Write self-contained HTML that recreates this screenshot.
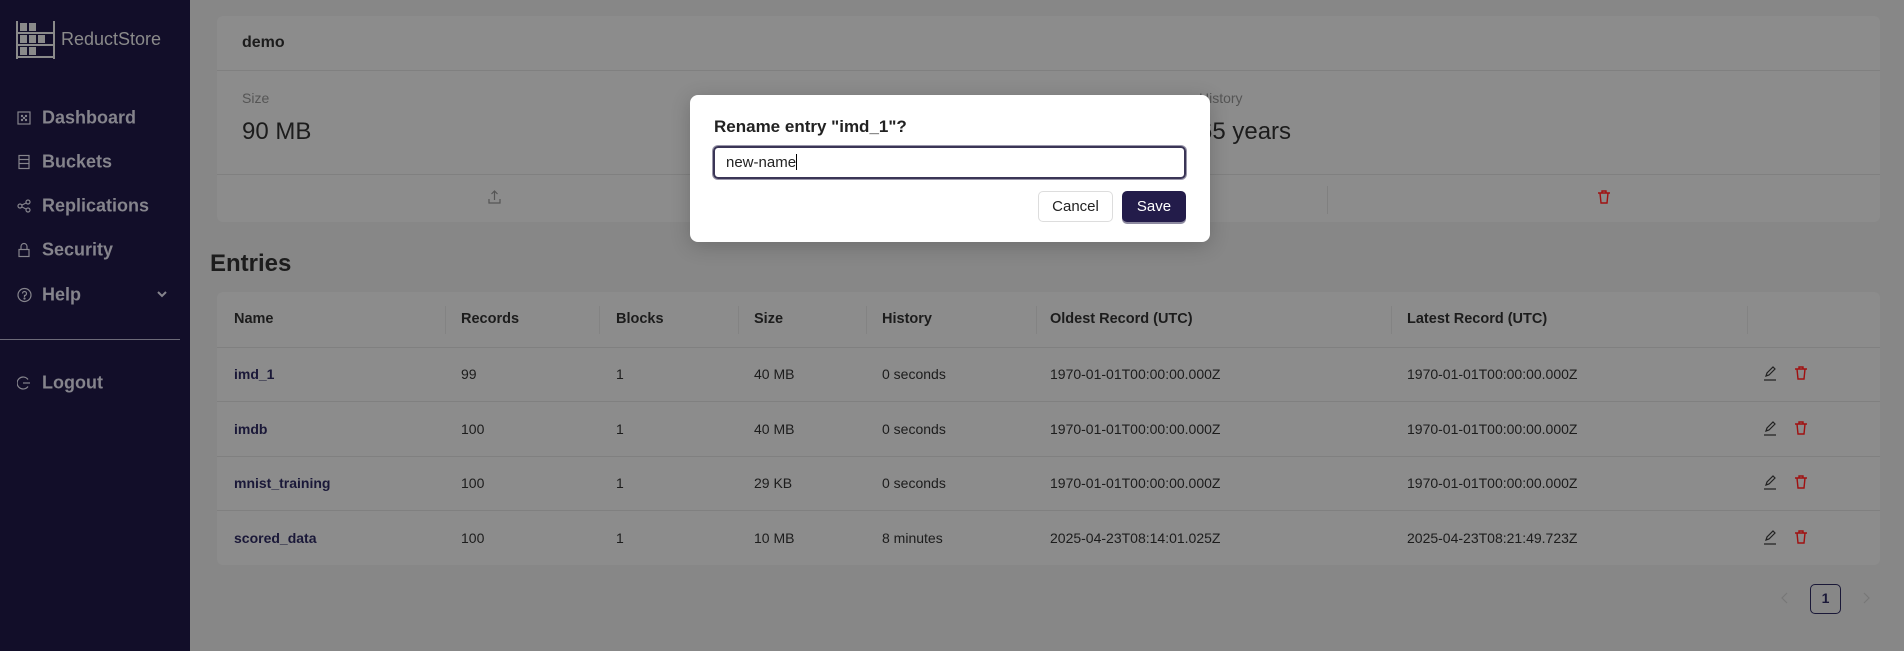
<!DOCTYPE html>
<html><head><meta charset="utf-8"><style>
*{box-sizing:border-box;margin:0;padding:0}
body{width:1904px;height:651px;overflow:hidden;background:#878787;font-family:"Liberation Sans",sans-serif;color:#1c1c1c;position:relative}
.a{position:absolute;white-space:nowrap}
#side{position:absolute;left:0;top:0;width:190px;height:651px;background:#120e29}
.nav{position:absolute;left:42px;font-size:18px;font-weight:bold;color:#85848c;transform:translateY(-50%)}
.ic{position:absolute;left:17px;transform:translateY(-50%)}
.card{position:absolute;left:217px;width:1663px;background:#8c8c8c;border-radius:6px}
.th{font-size:14.5px;font-weight:bold;transform:translateY(-50%)}
.td{font-size:14px;transform:translateY(-50%)}
.hl{position:absolute;height:1px;background:#808080}
</style></head><body>
<div id="side">
<svg class="a" style="left:16px;top:21px" width="40" height="38" viewBox="0 0 40 38" fill="none" stroke="#8a8a8a" stroke-width="2">
<line x1="1" y1="0" x2="1" y2="38"/><line x1="38" y1="0" x2="38" y2="38"/>
<line x1="1" y1="12" x2="38" y2="12"/><line x1="1" y1="24" x2="38" y2="24"/><line x1="1" y1="36" x2="38" y2="36"/>
<g fill="#8a8a8a" stroke="none"><rect x="4" y="2" width="7" height="8"/><rect x="13" y="2" width="7" height="8"/>
<rect x="4" y="14" width="7" height="8"/><rect x="13" y="14" width="7" height="8"/><rect x="22" y="14" width="7" height="8"/>
<rect x="4" y="26" width="7" height="8"/><rect x="13" y="26" width="7" height="8"/></g></svg>
<div class="a" style="left:61px;top:29px;font-size:18px;color:#8a8a8a">ReductStore</div>
<svg class="ic" style="top:118px" width="14" height="14" viewBox="0 0 14 14" fill="none" stroke="#85848c" stroke-width="1.2"><rect x="1" y="1" width="12" height="12"/><circle cx="5" cy="5" r=".6"/><circle cx="9" cy="5" r=".6"/><circle cx="7" cy="7" r=".6"/><circle cx="5" cy="9" r=".6"/><circle cx="9" cy="9" r=".6"/></svg>
<div class="nav" style="top:118px">Dashboard</div>
<svg class="ic" style="top:162px" width="14" height="15" viewBox="0 0 14 15" fill="none" stroke="#85848c" stroke-width="1.2"><rect x="2" y="1" width="10" height="13"/><line x1="2" y1="5" x2="12" y2="5"/><line x1="2" y1="9" x2="12" y2="9"/></svg>
<div class="nav" style="top:162px">Buckets</div>
<svg class="ic" style="top:206px" width="14" height="14" viewBox="0 0 14 14" fill="none" stroke="#85848c" stroke-width="1.2"><circle cx="3" cy="7" r="2"/><circle cx="11" cy="3" r="2"/><circle cx="11" cy="11" r="2"/><line x1="5" y1="6" x2="9" y2="4"/><line x1="5" y1="8" x2="9" y2="10"/></svg>
<div class="nav" style="top:206px">Replications</div>
<svg class="ic" style="top:250px" width="14" height="15" viewBox="0 0 14 15" fill="none" stroke="#85848c" stroke-width="1.2"><rect x="2" y="7" width="10" height="7"/><path d="M4 7V4a3 3 0 0 1 6 0v3"/></svg>
<div class="nav" style="top:250px">Security</div>
<svg class="ic" style="top:295px" width="15" height="15" viewBox="0 0 15 15" fill="none" stroke="#85848c" stroke-width="1.2"><circle cx="7.5" cy="7.5" r="6.5"/><path d="M5.5 6a2 2 0 1 1 2 2v1.5"/><circle cx="7.5" cy="11" r=".5"/></svg>
<div class="nav" style="top:295px">Help</div>
<svg class="a" style="left:157px;top:290px" width="10" height="8" viewBox="0 0 10 8" fill="none" stroke="#85848c" stroke-width="2"><path d="M1 2l4 4 4-4"/></svg>
<div class="a" style="left:0;top:339px;width:180px;height:1px;background:#6c6a78"></div>
<svg class="ic" style="top:383px" width="14" height="14" viewBox="0 0 14 14" fill="none" stroke="#85848c" stroke-width="1.2"><path d="M11 3.5A6 6 0 1 0 11 10.5"/><line x1="6" y1="7" x2="13" y2="7"/></svg>
<div class="nav" style="top:383px">Logout</div>
</div>

<div class="card" style="top:16px;height:206px"></div>
<div class="hl" style="left:217px;top:70px;width:1663px"></div>
<div class="hl" style="left:217px;top:174px;width:1663px"></div>
<div class="a" style="left:1327px;top:186px;width:1px;height:28px;background:#808080"></div>
<div class="a" style="left:242px;top:34px;font-size:16px;font-weight:bold">demo</div>
<div class="a" style="left:242px;top:90px;font-size:14px;color:#555">Size</div>
<div class="a" style="left:242px;top:118px;font-size:24px">90 MB</div>
<div class="a" style="left:1199px;top:90px;font-size:14px;color:#555">History</div>
<div class="a" style="left:1199px;top:118px;font-size:24px">65 years</div>
<svg class="a" style="left:488px;top:190px" width="13" height="14" viewBox="0 0 13 14" fill="none" stroke="#555" stroke-width="1.2"><path d="M6.5 10V1M3.5 4l3-3 3 3M1 9v4h11V9"/></svg>
<svg class="a" style="left:1598px;top:190px" width="12" height="14" viewBox="0 0 12 14" fill="none" stroke="#a01010" stroke-width="1.4"><path d="M0 3h12M4 3V1h4v2M2 3l1 10h6l1-10"/></svg>

<div class="a" style="left:210px;top:250px;font-size:24px;font-weight:bold">Entries</div>

<div class="card" style="top:292px;height:273px"></div>
<div class="hl" style="left:217px;top:347px;width:1663px"></div>
<div class="hl" style="left:217px;top:401px;width:1663px"></div>
<div class="hl" style="left:217px;top:456px;width:1663px"></div>
<div class="hl" style="left:217px;top:510px;width:1663px"></div>
<div class="a" style="left:445px;top:306px;width:1px;height:28px;background:#838383"></div>
<div class="a" style="left:599px;top:306px;width:1px;height:28px;background:#838383"></div>
<div class="a" style="left:738px;top:306px;width:1px;height:28px;background:#838383"></div>
<div class="a" style="left:866px;top:306px;width:1px;height:28px;background:#838383"></div>
<div class="a" style="left:1036px;top:306px;width:1px;height:28px;background:#838383"></div>
<div class="a" style="left:1391px;top:306px;width:1px;height:28px;background:#838383"></div>
<div class="a" style="left:1747px;top:306px;width:1px;height:28px;background:#838383"></div>

<div class="a th" style="left:234px;top:319px">Name</div>
<div class="a th" style="left:461px;top:319px">Records</div>
<div class="a th" style="left:616px;top:319px">Blocks</div>
<div class="a th" style="left:754px;top:319px">Size</div>
<div class="a th" style="left:882px;top:319px">History</div>
<div class="a th" style="left:1050px;top:319px">Oldest Record (UTC)</div>
<div class="a th" style="left:1407px;top:319px">Latest Record (UTC)</div>

<div class="a td" style="left:234px;top:374px;font-weight:bold;color:#1a1838">imd_1</div>
<div class="a td" style="left:461px;top:374px">99</div><div class="a td" style="left:616px;top:374px">1</div><div class="a td" style="left:754px;top:374px">40 MB</div><div class="a td" style="left:882px;top:374px">0 seconds</div><div class="a td" style="left:1050px;top:374px">1970-01-01T00:00:00.000Z</div><div class="a td" style="left:1407px;top:374px">1970-01-01T00:00:00.000Z</div>

<div class="a td" style="left:234px;top:429px;font-weight:bold;color:#1a1838">imdb</div>
<div class="a td" style="left:461px;top:429px">100</div><div class="a td" style="left:616px;top:429px">1</div><div class="a td" style="left:754px;top:429px">40 MB</div><div class="a td" style="left:882px;top:429px">0 seconds</div><div class="a td" style="left:1050px;top:429px">1970-01-01T00:00:00.000Z</div><div class="a td" style="left:1407px;top:429px">1970-01-01T00:00:00.000Z</div>

<div class="a td" style="left:234px;top:483px;font-weight:bold;color:#1a1838">mnist_training</div>
<div class="a td" style="left:461px;top:483px">100</div><div class="a td" style="left:616px;top:483px">1</div><div class="a td" style="left:754px;top:483px">29 KB</div><div class="a td" style="left:882px;top:483px">0 seconds</div><div class="a td" style="left:1050px;top:483px">1970-01-01T00:00:00.000Z</div><div class="a td" style="left:1407px;top:483px">1970-01-01T00:00:00.000Z</div>

<div class="a td" style="left:234px;top:538px;font-weight:bold;color:#1a1838">scored_data</div>
<div class="a td" style="left:461px;top:538px">100</div><div class="a td" style="left:616px;top:538px">1</div><div class="a td" style="left:754px;top:538px">10 MB</div><div class="a td" style="left:882px;top:538px">8 minutes</div><div class="a td" style="left:1050px;top:538px">2025-04-23T08:14:01.025Z</div><div class="a td" style="left:1407px;top:538px">2025-04-23T08:21:49.723Z</div>

<svg class="a" style="left:1763px;top:366px" width="14" height="15" viewBox="0 0 14 15" fill="none" stroke="#222" stroke-width="1.2"><path d="M3 10l1-3 6-6 2 2-6 6zM1 14h12"/></svg>
<svg class="a" style="left:1795px;top:366px" width="12" height="14" viewBox="0 0 12 14" fill="none" stroke="#a01010" stroke-width="1.4"><path d="M0 3h12M4 3V1h4v2M2 3l1 10h6l1-10"/></svg>
<svg class="a" style="left:1763px;top:421px" width="14" height="15" viewBox="0 0 14 15" fill="none" stroke="#222" stroke-width="1.2"><path d="M3 10l1-3 6-6 2 2-6 6zM1 14h12"/></svg>
<svg class="a" style="left:1795px;top:421px" width="12" height="14" viewBox="0 0 12 14" fill="none" stroke="#a01010" stroke-width="1.4"><path d="M0 3h12M4 3V1h4v2M2 3l1 10h6l1-10"/></svg>
<svg class="a" style="left:1763px;top:475px" width="14" height="15" viewBox="0 0 14 15" fill="none" stroke="#222" stroke-width="1.2"><path d="M3 10l1-3 6-6 2 2-6 6zM1 14h12"/></svg>
<svg class="a" style="left:1795px;top:475px" width="12" height="14" viewBox="0 0 12 14" fill="none" stroke="#a01010" stroke-width="1.4"><path d="M0 3h12M4 3V1h4v2M2 3l1 10h6l1-10"/></svg>
<svg class="a" style="left:1763px;top:530px" width="14" height="15" viewBox="0 0 14 15" fill="none" stroke="#222" stroke-width="1.2"><path d="M3 10l1-3 6-6 2 2-6 6zM1 14h12"/></svg>
<svg class="a" style="left:1795px;top:530px" width="12" height="14" viewBox="0 0 12 14" fill="none" stroke="#a01010" stroke-width="1.4"><path d="M0 3h12M4 3V1h4v2M2 3l1 10h6l1-10"/></svg>

<svg class="a" style="left:1781px;top:592px" width="8" height="12" viewBox="0 0 8 12" fill="none" stroke="#777" stroke-width="1.2"><path d="M6 1L1 6l5 5"/></svg>
<div class="a" style="left:1810px;top:584px;width:31px;height:30px;border:1.5px solid #1a1838;border-radius:5px;font-size:14px;font-weight:bold;line-height:27px;text-align:center;color:#1a1838">1</div>
<svg class="a" style="left:1862px;top:592px" width="8" height="12" viewBox="0 0 8 12" fill="none" stroke="#777" stroke-width="1.2"><path d="M2 1l5 5-5 5"/></svg>

<div class="a" style="left:690px;top:95px;width:520px;height:147px;background:#fff;border-radius:8px;box-shadow:0 4px 20px rgba(0,0,0,.2)"></div>
<div class="a" style="left:714px;top:117px;font-size:17px;font-weight:bold;color:#222">Rename entry "imd_1"?</div>
<div class="a" style="left:713px;top:146px;width:473px;height:33px;border:2px solid #3a3556;border-radius:5px;box-shadow:0 0 0 1px #9a97aa"></div>
<div class="a" style="left:726px;top:154px;font-size:15px;color:#222">new-name<span style="display:inline-block;width:1px;height:16px;background:#000;vertical-align:-3px"></span></div>
<div class="a" style="left:1038px;top:191px;width:75px;height:31px;border:1px solid #ddd;border-radius:5px;font-size:15px;line-height:29px;text-align:center;color:#222">Cancel</div>
<div class="a" style="left:1122px;top:191px;width:64px;height:31px;background:#231c4a;border-radius:5px;font-size:15px;line-height:31px;text-align:center;color:#fff;box-shadow:0 2px 0 #8d8aa0">Save</div>
</body></html>
